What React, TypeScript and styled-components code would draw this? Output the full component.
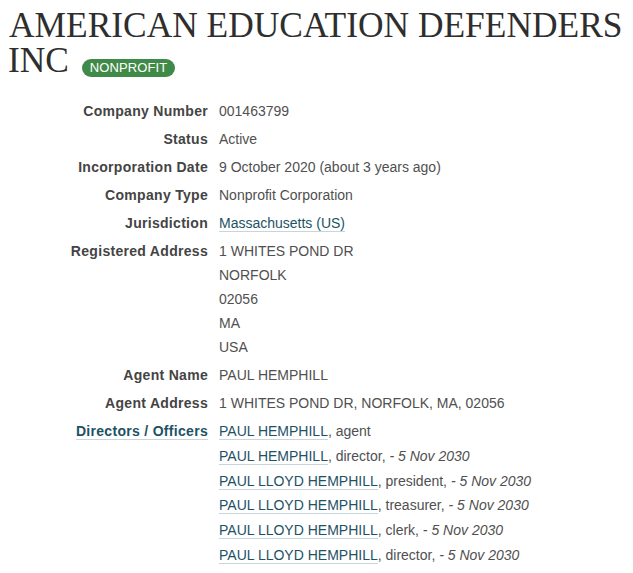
import React from "react";
import styled, { createGlobalStyle } from "styled-components";

const Global = createGlobalStyle`
  html, body { margin: 0; padding: 0; background: #fff; }
  body { font-family: "Liberation Sans", Arial, sans-serif; }
`;

const Page = styled.div`
  padding: 8px 8px 0 8px;
`;

const Title = styled.h1`
  margin: 0;
  font-family: "Liberation Serif", "Times New Roman", serif;
  font-weight: normal;
  font-size: 35.4px;
  line-height: 35px;
  color: #2e2e2e;
`;

const TitleText = styled.span`
  margin-left: 1px;
`;

const Badge = styled.span`
  display: inline-block;
  margin-left: 4px;
  padding: 0 8px;
  height: 18px;
  line-height: 18px;
  border-radius: 9px;
  background: #3f8a48;
  color: #fff;
  font-family: "Liberation Sans", Arial, sans-serif;
  font-size: 13px;
  letter-spacing: 0.1px;
  vertical-align: baseline;
`;

const List = styled.dl`
  margin: 21px 0 0 0;
  display: grid;
  grid-template-columns: 200px 1fr;
  column-gap: 11px;
  row-gap: 4px;
  font-size: 14px;
  line-height: 24px;
`;

const Label = styled.dt<{ $link?: boolean }>`
  text-align: right;
  font-weight: bold;
  letter-spacing: 0.3px;
  color: ${(p) => (p.$link ? "#1d5265" : "#444")};
  & > span {
    border-bottom: ${(p) => (p.$link ? "1px solid #c8d5db" : "none")};
  }
`;

const Value = styled.dd`
  margin: 0;
  color: #505050;
`;

const Line = styled.div<{ $h?: number }>`
  line-height: ${(p) => p.$h ?? 24}px;
`;

const Link = styled.a`
  color: #1d5265;
  text-decoration: none;
  border-bottom: 1px solid #c8d5db;
`;

const Date = styled.em`
  font-style: italic;
`;

const officers = [
  { name: "PAUL HEMPHILL", role: "agent", date: "" },
  { name: "PAUL HEMPHILL", role: "director", date: "5 Nov 2030" },
  { name: "PAUL LLOYD HEMPHILL", role: "president", date: "5 Nov 2030" },
  { name: "PAUL LLOYD HEMPHILL", role: "treasurer", date: "5 Nov 2030" },
  { name: "PAUL LLOYD HEMPHILL", role: "clerk", date: "5 Nov 2030" },
  { name: "PAUL LLOYD HEMPHILL", role: "director", date: "5 Nov 2030" },
];

export default function App() {
  return (
    <Page>
      <Global />
      <Title>
        <TitleText>AMERICAN EDUCATION DEFENDERS INC</TitleText>{" "}
        <Badge>NONPROFIT</Badge>
      </Title>
      <List>
        <Label>Company Number</Label>
        <Value>001463799</Value>
        <Label>Status</Label>
        <Value>Active</Value>
        <Label>Incorporation Date</Label>
        <Value>9 October 2020 (about 3 years ago)</Value>
        <Label>Company Type</Label>
        <Value>Nonprofit Corporation</Value>
        <Label>Jurisdiction</Label>
        <Value>
          <Link href="#">Massachusetts (US)</Link>
        </Value>
        <Label>Registered Address</Label>
        <Value>
          <Line>1 WHITES POND DR</Line>
          <Line>NORFOLK</Line>
          <Line>02056</Line>
          <Line>MA</Line>
          <Line>USA</Line>
        </Value>
        <Label>Agent Name</Label>
        <Value>PAUL HEMPHILL</Value>
        <Label>Agent Address</Label>
        <Value>1 WHITES POND DR, NORFOLK, MA, 02056</Value>
        <Label $link>
          <span>Directors / Officers</span>
        </Label>
        <Value>
          {officers.map((o, i) => (
            <Line key={i} $h={24.8}>
              <Link href="#">{o.name}</Link>, {o.role}
              {o.date && (
                <>
                  , <Date>- {o.date}</Date>
                </>
              )}
            </Line>
          ))}
        </Value>
      </List>
    </Page>
  );
}
